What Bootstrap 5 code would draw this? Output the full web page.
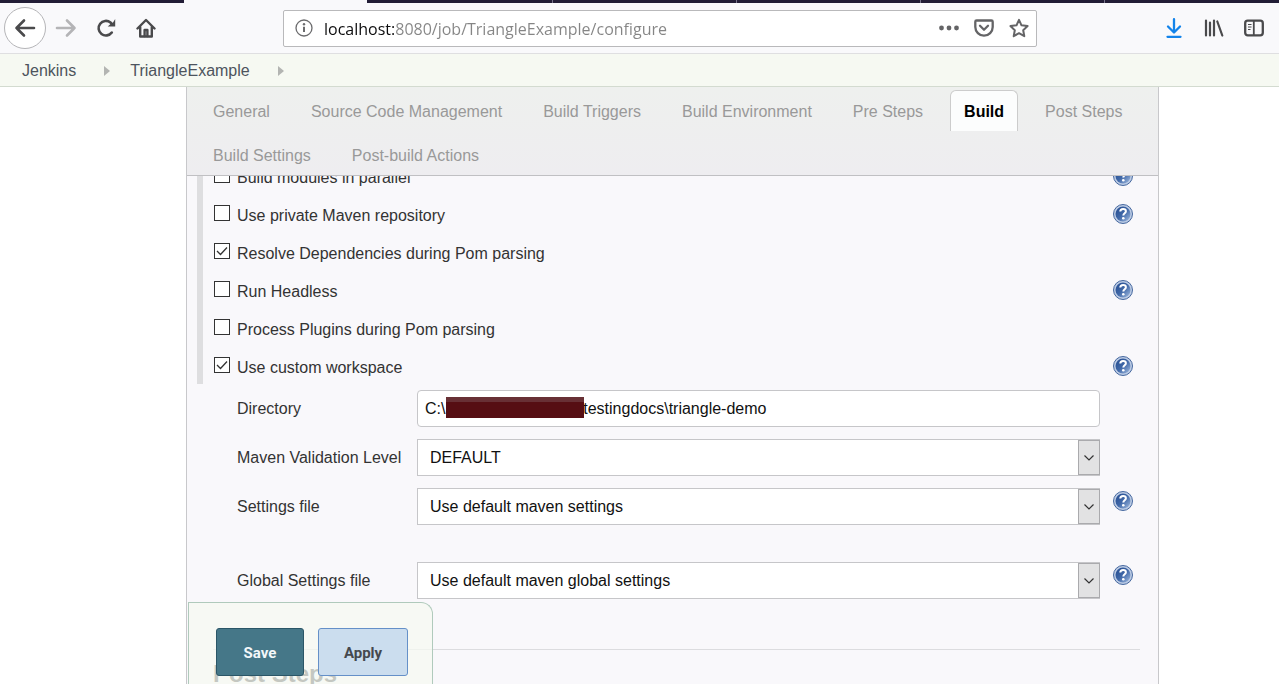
<!DOCTYPE html>
<html lang="en">
<head>
<meta charset="utf-8">
<meta name="viewport" content="width=device-width, initial-scale=1">
<title>TriangleExample Config [Jenkins]</title>
<link href="https://cdn.jsdelivr.net/npm/bootstrap@5.3.0/dist/css/bootstrap.min.css" rel="stylesheet">
<style>
  body { font-family: "Liberation Sans", Arial, sans-serif; font-size: 16px; line-height: 20px; color: #333; background: #fff; }
  svg { display: block; }

  /* browser chrome */
  .window-strip { height: 3px; background: #221d36; }
  .strip-active { width: 183px; margin: 0 2px 0 184px; background: #f9f9fb; }
  .strip-tab { width: 184px; border-right: 1px solid #77738a; }
  .toolbar { height: 51px; background: #f9f9fb; border-bottom: 1px solid #dfdfe1; padding: 0 5px 0 4px; color: #4a4a4c; }
  .tool { width: 40px; height: 42px; padding: 0; border: 0; background: none; color: inherit; display: flex; align-items: center; justify-content: center; }
  .tool-back { width: 42px; border: 1px solid #b5b5b8; border-radius: 50%; background: #fff; }
  .tool-off { color: #b4b4b6; }
  .tool-download { color: #1283ea; }
  .tool-narrow { width: 35px; height: 34px; color: #646466; }
  .address { height: 37px; margin: 0 117px; border: 1px solid #b9b9bb; border-radius: 2px; background: #fff; }
  .address-info { margin: 0 11px; }
  .address-input { border: 0; outline: 0; padding: 2px 0 0; min-width: 0; height: 35px; font-family: "Open Sans", "Noto Sans", sans-serif; font-size: 16px; color: #858585;
    background: linear-gradient(to right, #0c0c0d 71px, #858585 71px); -webkit-background-clip: text; background-clip: text; -webkit-text-fill-color: transparent; }

  /* breadcrumbs */
  .crumbs { height: 33px; padding: 2px 22px 0; background: #f6f9f2; border-bottom: 1px solid #d3dbd0; }
  .crumbs a { color: #4d545d; text-decoration: none; }
  .crumb-arrow { color: #b3b5b2; margin: 0 20px 0 28px; }

  /* configuration page */
  .config-wrap { padding: 0 120px 0 186px; }
  .config { background: #f9f8fb; border: solid #c8c8cb; border-width: 0 1px; }
  .section-tabs { padding: 3px 12px 0; gap: 3px 13px; background: linear-gradient(#eef0ee, #eeedf0); border-bottom: 1px solid #c0c0c3; }
  .section-tabs a { display: block; height: 41px; padding: 11px 13px 0; border: 1px solid transparent; border-width: 1px 1px 0; border-radius: 6px 6px 0 0; color: #999; text-decoration: none; }
  .section-tabs a.current { color: #000; font-weight: bold; background: #fcfdfd; border-color: #ccc; }
  .options { margin-left: 10px; padding-left: 11px; border-left: 6px solid #dedee0; overflow: hidden; height: 208px; }
  .options-list { margin-top: -18px; }
  .option { height: 38px; padding-right: 25px; }
  .option label { padding-top: 1px; }
  .option .help { margin-bottom: 2px; }
  .tick { appearance: none; width: 16px; height: 16px; margin: 0 7px 5px 0; border: 1px solid #333; background: #fff; }
  .tick:checked { background: #fff url("data:image/svg+xml,%3Csvg xmlns='http://www.w3.org/2000/svg' viewBox='0 0 14 14'%3E%3Cpath d='M2 7l3.500 3.500L12 3.500' fill='none' stroke='%23333' stroke-width='1.300'/%3E%3C/svg%3E"); }
  .help { width: 20px; height: 20px; padding: 0; border: 0; background: none; flex: none; }

  .fields { padding: 6px 25px 0 50px; }
  .field { margin-bottom: 12px; }
  .field .help { margin-bottom: 12px; }
  .field-label { width: 180px; flex: none; }
  .entry { height: 37px; margin-right: 13px; }
  .entry input, .entry select { width: 100%; height: 37px; border: 1px solid #c6c6c9; background: #fff; color: #111; outline: 0; }
  .entry input { padding: 0 7px; border-radius: 4px; }
  .entry select { appearance: none; padding: 0 34px 0 12px; border-radius: 0; }
  .drop { top: 1px; right: 0; width: 22px; height: 35px; background: #e2e2e3; border: 1px solid #aaaaad; pointer-events: none; }
  .masked { left: 29px; top: 7px; width: 138px; height: 21px; background: #560e13; border-top: 5px solid #683035; }
  .help-slot { width: 20px; flex: none; }
  .after-gap { margin-bottom: 37px; }
  .next-section { margin: 50px 18px 0 26px; border-top: 1px solid #dcdcdf; padding-top: 11px; }
  .next-section h2 { font-size: 24px; line-height: 26px; font-weight: bold; margin: 0; color: #333; }

  .save-bar { left: 188px; bottom: 0; padding: 25px 24px 8px 27px; gap: 14px; background: rgba(245, 250, 242, .75); border: 1px solid #b0cabc; border-bottom: 0; border-radius: 0 12px 0 0; }
  .save-bar button { height: 48px; border-radius: 3px; font-family: Roboto, sans-serif; font-weight: bold; font-size: 15px; padding: 2px 0 0; }
  .btn-store { width: 88px; background: #457788; border: 1px solid #2b5667; color: #f3f8fa; }
  .btn-use { width: 90px; background: #cbddee; border: 1px solid #6590c8; color: #45484d; }
</style>
</head>
<body class="vh-100 overflow-hidden d-flex flex-column">
<svg width="0" height="0" class="position-absolute" aria-hidden="true">
  <defs>
    <linearGradient id="ball" x1="0" y1="0" x2="1" y2="1"><stop offset="0" stop-color="#234a8e"/><stop offset=".5" stop-color="#4068a8"/><stop offset="1" stop-color="#a6bfe2"/></linearGradient>
    <symbol id="help" viewBox="0 0 20 20">
      <circle cx="10" cy="10" r="9.500" fill="#bccbe4" stroke="#46689f"/>
      <circle cx="10" cy="10" r="7.500" fill="url(#ball)"/>
      <path d="M7.300 7.600C7.300 5.800 8.500 5 10.100 5c1.700 0 2.800.9 2.800 2.300 0 2-2.600 2-2.600 4.200" fill="none" stroke="#fff" stroke-width="2"/>
      <circle cx="10.300" cy="14.200" r="1.300" fill="#fff"/>
    </symbol>
    <symbol id="down" viewBox="0 0 12 8"><path d="M1.500 1.500L6 6l4.500-4.500" fill="none" stroke="#333" stroke-width="1.200"/></symbol>
  </defs>
</svg>

<div class="window-strip d-flex overflow-hidden flex-shrink-0">
  <div class="strip-active flex-shrink-0"></div>
  <div class="strip-tab flex-shrink-0"></div><div class="strip-tab flex-shrink-0"></div><div class="strip-tab flex-shrink-0"></div><div class="strip-tab flex-shrink-0"></div>
</div>
<header class="toolbar d-flex align-items-center flex-shrink-0">
  <button class="tool tool-back" aria-label="Back"><svg width="22" height="20" viewBox="0 0 22 20" fill="none" stroke="currentColor" stroke-width="2.600" stroke-linecap="round" stroke-linejoin="round"><path d="M20 10H2.500M10 2.500L2.500 10l7.500 7.500"/></svg></button>
  <button class="tool tool-off" aria-label="Forward"><svg width="22" height="20" viewBox="0 0 22 20" fill="none" stroke="currentColor" stroke-width="2.600" stroke-linecap="round" stroke-linejoin="round"><path d="M2 10h17.500M12 2.500l7.500 7.500-7.500 7.500"/></svg></button>
  <button class="tool" aria-label="Reload"><svg width="20" height="20" viewBox="0 0 20 20"><path d="M15.800 14.500A7.300 7.300 0 1 1 14.500 4.500l2 2" fill="none" stroke="currentColor" stroke-width="2.600" stroke-linecap="round"/><path d="M19.200 1v7.500h-7.500l2.800-2.500 2.200-1z" fill="currentColor"/></svg></button>
  <button class="tool" aria-label="Home"><svg width="20" height="20" viewBox="0 0 20 20" fill="none" stroke="currentColor" stroke-width="2.400" stroke-linecap="round" stroke-linejoin="round"><path d="M1.500 10.500L10 2l8.500 8.500M4.200 9v9.500h11.600V9"/><path d="M8.600 18v-6h2.800v6"/></svg></button>

  <div class="address d-flex align-items-center flex-grow-1">
    <svg class="address-info flex-shrink-0" width="18" height="18" viewBox="0 0 18 18"><circle cx="9" cy="9" r="8" fill="none" stroke="#6b6b6d" stroke-width="1.300"/><path d="M9 7.800v5.200" stroke="#6b6b6d" stroke-width="2"/><circle cx="9" cy="5.300" r="1.200" fill="#6b6b6d"/></svg>
    <input class="address-input flex-grow-1" type="text" aria-label="Address" value="localhost:8080/job/TriangleExample/configure">
    <button class="tool tool-narrow" aria-label="Page actions"><svg width="20" height="6" viewBox="0 0 20 6" fill="currentColor"><circle cx="2.500" cy="3" r="2.400"/><circle cx="10" cy="3" r="2.400"/><circle cx="17.500" cy="3" r="2.400"/></svg></button>
    <button class="tool tool-narrow" aria-label="Save to Pocket"><svg width="20" height="18" viewBox="0 0 20 18" fill="none" stroke="currentColor" stroke-width="2.300" stroke-linecap="round" stroke-linejoin="round"><path d="M2.600 1.500h14.800q1.300 0 1.300 1.300V8a8.700 8.700 0 0 1-17.400 0V2.800q0-1.300 1.300-1.300z"/><path d="M6 6.800l4 3.900 4-3.900"/></svg></button>
    <button class="tool tool-narrow" aria-label="Bookmark this page"><svg width="20" height="20" viewBox="0 0 20 20" fill="none" stroke="currentColor" stroke-width="2" stroke-linejoin="round"><path d="M10 1.800l2.500 5.500 6.100.8-4.400 4.100 1.100 6L10 15.200l-5.300 3 1.100-6L1.400 8.100l6.100-.8z"/></svg></button>
  </div>

  <button class="tool tool-download" aria-label="Downloads"><svg width="16" height="20" viewBox="0 0 16 20" fill="none" stroke="currentColor" stroke-width="2.300" stroke-linecap="round" stroke-linejoin="round"><path d="M8 1.200v13M2 8.500l6 6 6-6M1.500 18.800h13"/></svg></button>
  <button class="tool" aria-label="Library"><svg width="20" height="18" viewBox="0 0 20 18" fill="none" stroke="currentColor" stroke-width="2.200" stroke-linecap="round"><path d="M2 1.500v15M6 3.500v13M10 1.500v15M13.300 2.500l5 14"/></svg></button>
  <button class="tool" aria-label="Sidebars"><svg width="20" height="18" viewBox="0 0 20 18" fill="none" stroke="currentColor"><rect x="1.200" y="1.700" width="17.600" height="14.600" rx="2.500" stroke-width="2.300"/><path d="M9.800 2v14" stroke-width="1.800"/><path d="M4 5.500h3.500M4 8h3.500M4 10.500h2.500" stroke-width="1.100"/></svg></button>
</header>

<nav class="crumbs d-flex align-items-center flex-shrink-0" aria-label="Breadcrumb">
  <a href="#">Jenkins</a>
  <svg class="crumb-arrow" width="6" height="10" viewBox="0 0 6 10" fill="currentColor"><path d="M0 0l6 5-6 5z"/></svg>
  <a href="#">TriangleExample</a>
  <svg class="crumb-arrow" width="6" height="10" viewBox="0 0 6 10" fill="currentColor"><path d="M0 0l6 5-6 5z"/></svg>
</nav>

<main class="config-wrap d-flex flex-column flex-grow-1 overflow-hidden">
  <div class="config flex-grow-1">
    <ul class="section-tabs d-flex flex-wrap list-unstyled m-0">
      <li><a href="#">General</a></li>
      <li><a href="#">Source Code Management</a></li>
      <li><a href="#">Build Triggers</a></li>
      <li><a href="#">Build Environment</a></li>
      <li><a href="#">Pre Steps</a></li>
      <li><a href="#" class="current" aria-current="page">Build</a></li>
      <li><a href="#">Post Steps</a></li>
      <li><a href="#">Build Settings</a></li>
      <li><a href="#">Post-build Actions</a></li>
    </ul>

    <form id="config">
      <div class="options">
        <div class="options-list">
          <div class="option d-flex align-items-center"><input class="tick" type="checkbox" id="parallel"><label class="me-auto" for="parallel">Build modules in parallel</label><button type="button" class="help" aria-label="Help"><svg width="20" height="20"><use href="#help"/></svg></button></div>
          <div class="option d-flex align-items-center"><input class="tick" type="checkbox" id="private"><label class="me-auto" for="private">Use private Maven repository</label><button type="button" class="help" aria-label="Help"><svg width="20" height="20"><use href="#help"/></svg></button></div>
          <div class="option d-flex align-items-center"><input class="tick" type="checkbox" id="resolve" checked><label for="resolve">Resolve Dependencies during Pom parsing</label></div>
          <div class="option d-flex align-items-center"><input class="tick" type="checkbox" id="headless"><label class="me-auto" for="headless">Run Headless</label><button type="button" class="help" aria-label="Help"><svg width="20" height="20"><use href="#help"/></svg></button></div>
          <div class="option d-flex align-items-center"><input class="tick" type="checkbox" id="plugins"><label for="plugins">Process Plugins during Pom parsing</label></div>
          <div class="option d-flex align-items-center"><input class="tick" type="checkbox" id="workspace" checked><label class="me-auto" for="workspace">Use custom workspace</label><button type="button" class="help" aria-label="Help"><svg width="20" height="20"><use href="#help"/></svg></button></div>
        </div>
      </div>

      <div class="fields">
        <div class="field d-flex align-items-center">
          <label class="field-label" for="directory">Directory</label>
          <div class="entry position-relative flex-grow-1"><input type="text" id="directory" value="C:\                               testingdocs\triangle-demo"><span class="masked position-absolute"></span></div>
          <span class="help-slot"></span>
        </div>
        <div class="field d-flex align-items-center">
          <label class="field-label" for="validation">Maven Validation Level</label>
          <div class="entry position-relative flex-grow-1"><select id="validation"><option>DEFAULT</option></select><span class="drop position-absolute d-flex align-items-center justify-content-center"><svg width="12" height="8"><use href="#down"/></svg></span></div>
          <span class="help-slot"></span>
        </div>
        <div class="field after-gap d-flex align-items-center">
          <label class="field-label" for="settings">Settings file</label>
          <div class="entry position-relative flex-grow-1"><select id="settings"><option>Use default maven settings</option></select><span class="drop position-absolute d-flex align-items-center justify-content-center"><svg width="12" height="8"><use href="#down"/></svg></span></div>
          <button type="button" class="help" aria-label="Help"><svg width="20" height="20"><use href="#help"/></svg></button>
        </div>
        <div class="field mb-0 d-flex align-items-center">
          <label class="field-label" for="global">Global Settings file</label>
          <div class="entry position-relative flex-grow-1"><select id="global"><option>Use default maven global settings</option></select><span class="drop position-absolute d-flex align-items-center justify-content-center"><svg width="12" height="8"><use href="#down"/></svg></span></div>
          <button type="button" class="help" aria-label="Help"><svg width="20" height="20"><use href="#help"/></svg></button>
        </div>
      </div>
      <div class="next-section"><h2>Post Steps</h2></div>
    </form>
  </div>
</main>

<div class="save-bar position-fixed d-flex">
  <button class="btn-store" type="submit" form="config">Save</button>
  <button class="btn-use" type="button">Apply</button>
</div>
<script src="https://cdn.jsdelivr.net/npm/bootstrap@5.3.0/dist/js/bootstrap.bundle.min.js"></script>
</body>
</html>
